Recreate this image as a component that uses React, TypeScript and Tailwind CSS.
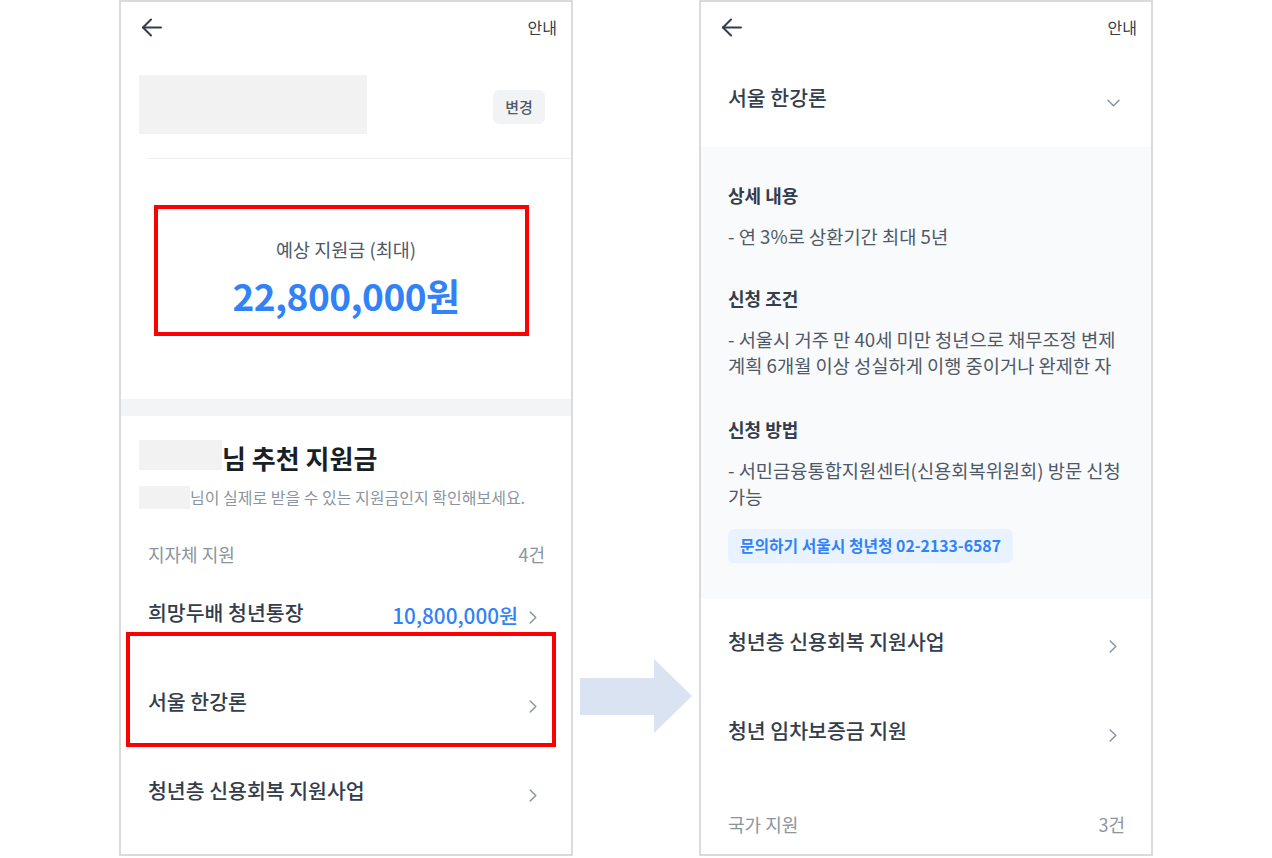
import React from "react";

function BackArrow() {
  return (
    <svg width="20" height="19" viewBox="0 0 20 19" fill="none" stroke="#333d4b" strokeWidth="2" strokeLinecap="round" strokeLinejoin="round">
      <path d="M1 9.5H19" />
      <path d="M9 1.5L1 9.5L9 17.5" />
    </svg>
  );
}

function ChevronRight() {
  return (
    <svg width="8" height="13" viewBox="0 0 8 13" fill="none" stroke="#8b95a1" strokeWidth="1.5" strokeLinecap="round" strokeLinejoin="round">
      <path d="M1.2 1L6.8 6.5L1.2 12" />
    </svg>
  );
}

function ChevronDown() {
  return (
    <svg width="13" height="8" viewBox="0 0 13 8" fill="none" stroke="#8b95a1" strokeWidth="1.5" strokeLinecap="round" strokeLinejoin="round">
      <path d="M1 1.2L6.5 6.8L12 1.2" />
    </svg>
  );
}

function Header() {
  return (
    <div className="h-[50px] flex items-center justify-between pl-[21px] pr-[14px] shrink-0">
      <BackArrow />
      <span className="text-[16px] text-[#333d4b]">안내</span>
    </div>
  );
}

function ItemRow({ title, right }: { title: string; right?: React.ReactNode }) {
  return (
    <div className="h-[89px] flex items-center pl-[27px] pr-[34px]">
      <span className="mb-[6px] text-[20.5px] font-medium text-[#333d4b] leading-[28px]">{title}</span>
      <div className="ml-auto flex items-center gap-[11px]">
        {right}
        <span className="mt-[6px] flex"><ChevronRight /></span>
      </div>
    </div>
  );
}

function LeftPhone() {
  return (
    <div className="w-[454px] h-[856px] border-2 border-[#dadada] bg-white flex flex-col overflow-hidden shrink-0">
      <Header />
      {/* profile row */}
      <div className="mt-[23px] flex items-start pl-[18px] pr-[26px]">
        <div className="w-[228px] h-[59px] bg-[#f2f2f2]" />
        <div className="ml-auto mt-[15px] w-[52px] h-[34px] rounded-md bg-[#f2f3f5] flex items-center justify-center text-[15px] font-medium text-[#4e5968]">
          변경
        </div>
      </div>
      <div className="mt-[24px] ml-[26px] h-px bg-[#eeeeee]" />
      {/* expected amount */}
      <div className="mt-[46px] ml-[33px] w-[375px] h-[131px] border-4 border-[#ff0000] flex flex-col items-center pl-[9px]">
        <div className="mt-[28px] text-[18.5px] leading-[24px] text-[#4e5968]">예상 지원금 (최대)</div>
        <div className="mt-[12px] text-[37px] leading-[44px] font-bold text-[#3182f6] tracking-[-0.5px]">22,800,000원</div>
      </div>
      <div className="mt-[63px] h-[17px] bg-[#f2f4f6] shrink-0" />
      {/* recommendations */}
      <div className="mt-[24px] flex items-start pl-[18px]">
        <div className="w-[83px] h-[30px] bg-[#f2f2f2]" />
        <div className="mt-[1px] text-[26px] leading-[34px] font-bold text-[#191f28]">님 추천 지원금</div>
      </div>
      <div className="mt-[11px] flex items-start pl-[18px]">
        <div className="w-[51px] h-[23px] bg-[#f2f2f2]" />
        <div className="text-[16px] leading-[22px] text-[#8b95a1]">님이 실제로 받을 수 있는 지원금인지 확인해보세요.</div>
      </div>
      <div className="mt-[33px] flex items-center justify-between pl-[27px] pr-[26px] text-[18px] leading-[24px] text-[#8b95a1]">
        <span>지자체 지원</span>
        <span>4건</span>
      </div>
      <div className="mt-[4px]">
        <ItemRow
          title="희망두배 청년통장"
          right={<span className="text-[20.7px] font-medium text-[#3182f6] leading-[28px] mt-[1px]">10,800,000원</span>}
        />
        <div className="relative">
          <ItemRow title="서울 한강론" />
          <div className="absolute top-[-27px] bottom-[1px] left-[5px] right-[15px] border-4 border-[#ff0000]" />
        </div>
        <ItemRow title="청년층 신용회복 지원사업" />
      </div>
    </div>
  );
}

function DetailLine({ children }: { children: React.ReactNode }) {
  return <div className="text-[18.7px] leading-[26px] text-[#4e5968]">{children}</div>;
}

function DetailTitle({ children, className }: { children: React.ReactNode; className?: string }) {
  return <div className={"text-[18px] leading-[24px] font-bold text-[#333d4b] " + (className ?? "")}>{children}</div>;
}

function RightPhone() {
  return (
    <div className="w-[454px] h-[856px] border-2 border-[#dadada] bg-white flex flex-col overflow-hidden shrink-0">
      <Header />
      <div className="h-[95px] flex items-center pl-[27px] pr-[31px] shrink-0">
        <span className="mb-[5px] text-[20.5px] font-medium text-[#333d4b] leading-[28px]">서울 한강론</span>
        <span className="ml-auto mt-[6px] flex"><ChevronDown /></span>
      </div>
      {/* expanded details */}
      <div className="bg-[#f9fafb] pl-[27px] pr-[16px] pt-[36px] pb-[36px]">
        <DetailTitle>상세 내용</DetailTitle>
        <div className="mt-[16px]">
          <DetailLine>- 연 3%로 상환기간 최대 5년</DetailLine>
        </div>
        <DetailTitle className="mt-[37px]">신청 조건</DetailTitle>
        <div className="mt-[16px]">
          <DetailLine>- 서울시 거주 만 40세 미만 청년으로 채무조정 변제</DetailLine>
          <DetailLine>계획 6개월 이상 성실하게 이행 중이거나 완제한 자</DetailLine>
        </div>
        <DetailTitle className="mt-[39px]">신청 방법</DetailTitle>
        <div className="mt-[16px]">
          <DetailLine>- 서민금융통합지원센터(신용회복위원회) 방문 신청</DetailLine>
          <DetailLine>가능</DetailLine>
        </div>
        <div className="mt-[20px] inline-flex items-center h-[34px] px-[12px] rounded-md bg-[#e8f3ff] text-[15.8px] font-semibold text-[#3182f6]">
          문의하기 서울시 청년청 02-2133-6587
        </div>
      </div>
      <ItemRow title="청년층 신용회복 지원사업" />
      <ItemRow title="청년 임차보증금 지원" />
      <div className="mt-[35px] flex items-center justify-between pl-[27px] pr-[26px] text-[18px] leading-[24px] text-[#8b95a1]">
        <span>국가 지원</span>
        <span>3건</span>
      </div>
    </div>
  );
}

export default function App() {
  return (
    <div className="w-[1272px] h-[858px] bg-white flex font-['Noto_Sans_CJK_KR',sans-serif] overflow-hidden">
      <div className="pl-[119px] flex">
        <LeftPhone />
        <div className="w-[126px] shrink-0 flex flex-col">
          <svg className="mt-[659px] ml-[7px]" width="112" height="74" viewBox="0 0 112 74">
            <path d="M0 19H74V0L112 37L74 74V56H0Z" fill="#dae3f2" />
          </svg>
        </div>
        <RightPhone />
      </div>
    </div>
  );
}
